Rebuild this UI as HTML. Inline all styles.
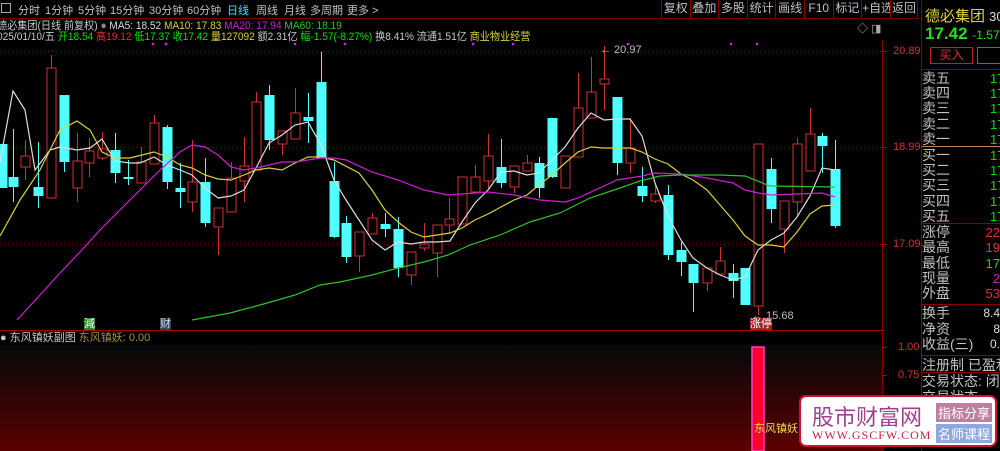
<!DOCTYPE html>
<html><head><meta charset="utf-8">
<style>
*{margin:0;padding:0;box-sizing:border-box}
body{width:1000px;height:451px;background:#000;overflow:hidden;position:relative;font-family:"Liberation Sans","Noto Sans CJK SC",sans-serif;color:#c8c8c8}
.a{position:absolute;white-space:nowrap}
.t{font-size:12px;line-height:14px}
.rp{position:absolute;left:922px;font-size:14px;color:#c0c0c0;line-height:15px;white-space:nowrap}
.g{color:#00e000}
.tb span{position:absolute;top:2px;font-size:11px;color:#c0c0c0;white-space:nowrap}
.bt{display:flex;position:absolute;left:661px;top:0;height:18px}
.bt span{width:28.6px;border-left:1px solid #800;font-size:12px;color:#c0c0c0;text-align:center;line-height:17px;white-space:nowrap;overflow:hidden}
</style></head><body>
<svg width="1000" height="451" style="position:absolute;left:0;top:0">
<defs><linearGradient id="sg" x1="0" y1="0" x2="0" y2="1"><stop offset="0" stop-color="#040a0a"/><stop offset="1" stop-color="#5c0000"/></linearGradient></defs>
<rect x="0" y="345" width="884" height="106" fill="url(#sg)"/>
<line x1="0" y1="18.5" x2="922" y2="18.5" stroke="#700"/>
<line x1="0" y1="330.5" x2="884" y2="330.5" stroke="#a00"/>
<line x1="882.5" y1="40" x2="882.5" y2="451" stroke="#800"/>
<line x1="921.5" y1="0" x2="921.5" y2="451" stroke="#800"/>
<g stroke="#800" stroke-dasharray="1,3">
<line x1="0" y1="51.5" x2="882" y2="51.5"/><line x1="0" y1="147.5" x2="882" y2="147.5"/><line x1="0" y1="244.5" x2="882" y2="244.5"/>
</g>
<g stroke="#a00"><line x1="882" y1="51.5" x2="887" y2="51.5"/><line x1="882" y1="147.5" x2="887" y2="147.5"/><line x1="882" y1="244.5" x2="887" y2="244.5"/><line x1="882" y1="347.5" x2="887" y2="347.5"/><line x1="882" y1="375.5" x2="887" y2="375.5"/></g>
<g id="cd"></g>
<g fill="none" stroke-width="1.2">
<polyline stroke="#ddd" points="0,162 13,91 25,110 35,170 50,150 60,147 77,150 90,148 102,139 115,161 130,163 140,163 154,157 167,165 180,170 192,175 205,188 218,198 231,196 244,190 256,168 269,143 282,135 295,125 308,122 321,145 334,180 346,200 359,220 372,240 385,250 398,242 411,244 424,242 437,242 450,241 462,222 475,203 488,190 501,172 514,171 527,175 539,173 552,160 565,147 578,128 591,113 604,120 617,119 630,119 642,136 655,183 668,216 681,240 693,258 707,268 720,275 733,280 745,277 758,250 771,240 784,233 797,217 810,196 822,168 835,170"/>
<polyline stroke="#d8d040" points="0,236 20,200 40,170 60,130 77,121 90,130 102,152 115,158 130,158 154,152 167,157 180,165 192,168 205,175 218,179 231,180 244,175 256,170 269,168 282,170 295,163 308,157 321,157 334,160 359,173 372,190 385,210 398,222 411,232 424,237 450,233 462,228 475,220 488,214 501,207 514,200 527,195 539,185 552,175 565,163 578,152 591,147 604,148 630,148 642,152 655,159 668,164 681,174 693,180 707,190 720,205 733,220 745,236 758,245 771,245 784,247 797,232 810,214 822,206 835,205"/>
<polyline stroke="#d020d0" points="17,320 40,295 60,273 80,252 100,230 120,210 140,190 160,170 180,152 192,145 205,147 218,155 231,167 244,170 256,168 269,165 282,162 295,162 308,160 321,158 334,158 346,160 372,172 398,180 424,190 448,195 462,194 488,192 514,195 540,200 565,202 578,198 591,192 617,180 642,176 655,173 681,174 707,178 733,183 745,190 758,193 771,195 797,194 822,193 835,197"/>
<polyline stroke="#30c030" points="192,320 230,313 260,305 295,295 320,285 340,282 372,275 398,268 424,262 448,255 470,245 500,235 530,222 560,213 590,198 620,188 640,181 660,176 680,175 720,175 745,176 770,186 835,187"/>
</g>
<g fill="#e020e0"><circle cx="153" cy="44" r="1.3"/><circle cx="166" cy="44" r="1.3"/><circle cx="295" cy="44" r="1.3"/><circle cx="345" cy="44" r="1.3"/><circle cx="473" cy="44" r="1.3"/><circle cx="513" cy="44" r="1.3"/><circle cx="628" cy="44" r="1.3"/><circle cx="731" cy="44" r="1.3"/><circle cx="757" cy="44" r="1.3"/></g>
<rect x="752" y="347" width="12" height="104" fill="#ff0030" stroke="#ff40c0" stroke-width="1.5"/>
</svg>
<script>
var c=[[2,144,188,144,188,0],[13,177,187,129,202,0],[25,156,167,140,180,1],[38,187,196,142,208,0],[51,68,198,55,198,1],[64,95,162,95,172,0],[77,161,188,133,202,1],[89,151,163,138,177,1],[102,149,158,132,160,1],[115,150,173,133,183,0],[128,177,179,160,185,0],[141,162,183,147,183,1],[154,123,164,115,164,1],[167,127,182,125,189,0],[180,188,192,163,208,0],[192,182,202,140,212,1],[205,182,223,158,227,0],[218,208,227,208,255,1],[231,178,212,162,212,1],[244,166,181,137,202,1],[256,102,170,92,170,1],[269,95,140,85,150,0],[282,131,144,131,155,1],[295,113,139,88,139,1],[308,117,121,93,143,0],[321,82,158,52,158,0],[334,181,237,162,238,0],[346,223,257,216,263,0],[359,232,256,232,272,1],[372,218,234,213,234,1],[385,224,229,213,237,0],[398,229,268,217,277,0],[411,252,275,252,285,1],[424,244,248,223,251,1],[437,225,253,225,277,1],[449,219,225,198,233,1],[462,177,224,177,224,1],[475,177,192,165,192,1],[488,156,181,134,190,1],[501,167,183,139,188,0],[514,166,187,166,193,1],[527,163,171,155,171,1],[539,163,188,157,198,0],[552,118,177,118,178,0],[565,156,188,156,188,1],[578,108,157,73,157,1],[591,92,118,57,118,1],[604,79,84,46,110,1],[617,97,163,97,175,0],[630,148,163,118,173,1],[642,186,196,167,202,0],[655,194,201,183,203,1],[668,195,255,185,260,0],[681,250,262,242,276,0],[693,264,283,264,312,0],[707,268,283,268,291,1],[720,261,274,247,274,1],[733,273,281,264,298,0],[745,268,305,268,305,0],[758,144,306,144,315,1],[771,169,209,158,223,0],[784,201,229,201,253,1],[797,144,202,138,217,1],[810,134,171,108,171,1],[822,136,146,133,173,0],[835,169,226,140,228,0]];
var s='';c.forEach(function(d){var x=d[0],col=d[5]?'#d03030':'#50ffff';s+='<line x1="'+(x+.5)+'" y1="'+d[3]+'" x2="'+(x+.5)+'" y2="'+d[4]+'" stroke="'+col+'"/>';if(d[5])s+='<rect x="'+(x-4)+'" y="'+d[1]+'" width="9" height="'+Math.max(1,d[2]-d[1])+'" fill="#000" stroke="'+col+'"/>';else s+='<rect x="'+(x-4.5)+'" y="'+d[1]+'" width="10" height="'+Math.max(2,d[2]-d[1])+'" fill="'+col+'"/>';});
document.getElementById('cd').innerHTML=s;
</script>
<!-- top toolbar -->
<div class="a" style="left:1px;top:3px;width:10px;height:10px;border:1px solid #aaa"></div>
<div class="tb">
<span style="left:18px">分时</span><span style="left:45px">1分钟</span><span style="left:78px">5分钟</span><span style="left:110px">15分钟</span><span style="left:149px">30分钟</span><span style="left:187px">60分钟</span><span style="left:227px;color:#40e0ff">日线</span><span style="left:256px">周线</span><span style="left:284px">月线</span><span style="left:310px">多周期</span><span style="left:347px">更多 &gt;</span>
</div>
<div class="bt"><span>复权</span><span>叠加</span><span>多股</span><span>统计</span><span>画线</span><span>F10</span><span>标记</span><span>+自选</span><span style="border-right:1px solid #800">返回</span></div>
<div class="a t" style="left:-3px;top:19px;font-size:11px;transform:scaleX(0.92);transform-origin:0 0">德必集团(日线 前复权) <span style="color:#888">●</span> <span style="color:#ddd">MA5: 18.52</span> <span style="color:#d8d040">MA10: 17.83</span> <span style="color:#d020d0">MA20: 17.94</span> <span style="color:#30c030">MA60: 18.19</span></div>
<div class="a t" style="left:-3px;top:30px;font-size:11px;transform:scaleX(0.92);transform-origin:0 0">025/01/10/五 <span class="g">开18.54</span> <span style="color:#e03030">高19.12</span> <span class="g">低17.37</span> <span class="g">收17.42</span> <span style="color:#d8d040">量127092</span> 额2.31亿 <span class="g">幅-1.57(-8.27%)</span> 换8.41% 流通1.51亿 <span style="color:#d8d040">商业物业经营</span></div>
<div class="a" style="left:857px;top:20px;font-size:11px;color:#aaa">◇ ◨</div>
<div class="a" style="left:600px;top:44px;font-size:11px;color:#bbb">← 20.97</div>
<div class="a" style="left:752px;top:310px;font-size:11px;color:#bbb">← 15.68</div>
<div class="a" style="left:84px;top:318px;font-size:11px;background:#208020;color:#fff;line-height:12px">減</div>
<div class="a" style="left:160px;top:318px;font-size:11px;background:#304050;color:#cde;line-height:12px">财</div>
<div class="a" style="left:750px;top:318px;font-size:11px;background:#a02020;color:#fff;line-height:12px">涨停</div>
<div class="a t" style="left:0;top:331px;font-size:11px">● 东风镇妖副图 <span style="color:#a09040">东风镇妖: 0.00</span></div>
<div class="a" style="left:754px;top:420px;font-size:11px;color:#f0e040">东风镇妖</div>
<!-- axis -->
<div class="a" style="left:893px;top:45px;font-size:11px;color:#d03030">20.89</div>
<div class="a" style="left:893px;top:141px;font-size:11px;color:#d03030">18.99</div>
<div class="a" style="left:893px;top:238px;font-size:11px;color:#d03030">17.09</div>
<div class="a" style="left:898px;top:341px;font-size:11px;color:#d03030">1.00</div>
<div class="a" style="left:898px;top:369px;font-size:11px;color:#d03030">0.75</div>
<!-- right panel -->
<div style="position:absolute;left:922px;top:0;width:78px;height:451px;overflow:hidden">
<div class="a" style="left:3px;top:5px;font-size:15px;color:#e0d040">德必集团 <span style="font-size:13px;color:#ddd">300</span></div>
<div class="a" style="left:3px;top:24px;font-size:17px;font-weight:bold;color:#20e020">17.42 <span style="font-size:12px;font-weight:normal">-1.57</span></div>
<div class="a" style="left:8px;top:47px;width:43px;height:17px;border:1px solid #c02020;color:#e03030;font-size:12px;text-align:center;line-height:15px">买入</div>
<div class="a" style="left:55px;top:47px;width:30px;height:17px;border:1px solid #3070c0"></div>
</div>
<div class="a" style="left:922px;top:69px;width:78px;height:1px;background:#800"></div>
<div class="rp" style="top:71px;line-height:15.2px">卖五<br>卖四<br>卖三<br>卖二<br>卖一</div>
<div class="a" style="left:922px;top:146px;width:78px;height:1px;background:#c08060"></div>
<div class="rp" style="top:148px;line-height:15.2px">买一<br>买二<br>买三<br>买四<br>买五</div>
<div class="a g" style="left:990px;top:71px;font-size:13px;line-height:15.2px">17<br>17<br>17<br>17<br>17</div>
<div class="a g" style="left:990px;top:148px;font-size:13px;line-height:15.2px">17<br>17<br>17<br>17<br>17</div>
<div class="a" style="left:922px;top:223px;width:78px;height:1px;background:#800"></div>
<div class="rp" style="top:225px;line-height:15.3px">涨停<br>最高<br>最低<br>现量<br>外盘</div>
<div class="a" style="left:984px;top:225px;font-size:13px;line-height:15.3px;text-align:right;width:16px"><span style="color:#e03030">22</span><br><span style="color:#e03030">19</span><br><span class="g">17</span><br><span style="color:#c020c0">2</span><br><span style="color:#e03030">53</span></div>
<div class="a" style="left:922px;top:304px;width:78px;height:1px;background:#800"></div>
<div class="rp" style="top:306px;line-height:15.5px">换手<br>净资<br>收益(三)</div>
<div class="a" style="left:975px;top:306px;font-size:12px;line-height:15.5px;color:#ddd;text-align:right;width:25px">8.4<br>8<br>0.</div>
<div class="a" style="left:922px;top:355px;width:78px;height:1px;background:#800"></div>
<div style="position:absolute;left:922px;top:357px;width:78px;height:94px;overflow:hidden;font-size:14px;line-height:16px;color:#c0c0c0;white-space:nowrap">注册制 已盈利<br>交易状态: 闭<br>交易状态</div>
<div class="a" style="left:922px;top:372px;width:78px;height:1px;background:#800"></div>
<!-- watermark -->
<div class="a" style="left:799px;top:395px;width:198px;height:52px;background:#fff;border:2px solid #d01030;border-radius:7px">
<div class="a" style="left:11px;top:3px;font-size:22px;color:#a04090">股市财富网</div>
<div class="a" style="left:11px;top:31px;font-size:12px;color:#d02040;font-family:'Liberation Serif',serif;letter-spacing:1px">WWW.GSCFW.COM</div>
<div class="a" style="left:135px;top:6px;font-size:13px;background:#c07fa0;color:#fff;padding:0 2px">指标分享</div>
<div class="a" style="left:135px;top:27px;font-size:13px;background:#8fa8e0;color:#fff;padding:0 2px">名师课程</div>
</div>
</body></html>
